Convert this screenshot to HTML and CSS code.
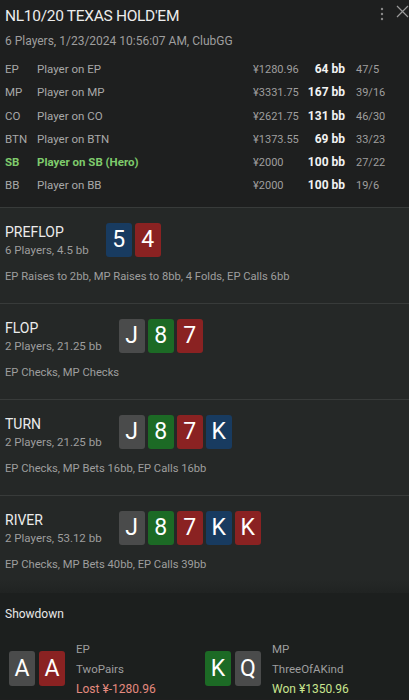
FILE: index.html
```html
<!DOCTYPE html>
<html>
<head>
<meta charset="utf-8">
<link rel="stylesheet" href="styles.css">
</head>
<body>
<div class="panel">
  <header class="header">
    <div class="title-row">
      <div class="title">NL10/20 TEXAS HOLD'EM</div>
      <div class="actions">
        <svg class="kebab" width="6" height="16" viewBox="0 0 6 16"><circle cx="3" cy="3" r="1.2"/><circle cx="3" cy="8" r="1.2"/><circle cx="3" cy="13" r="1.2"/></svg>
        <svg class="close" width="13" height="13" viewBox="0 0 13 13"><path d="M1 1 L12 12 M12 1 L1 12"/></svg>
      </div>
    </div>
    <div class="subtitle">6 Players, 1/23/2024 10:56:07 AM, ClubGG</div>
    <div class="players">
      <div class="prow"><span class="pos">EP</span><span class="name">Player on EP</span><span class="stack">¥1280.96</span><span class="bb">64 bb</span><span class="ratio">47/5</span></div>
      <div class="prow"><span class="pos">MP</span><span class="name">Player on MP</span><span class="stack">¥3331.75</span><span class="bb">167 bb</span><span class="ratio">39/16</span></div>
      <div class="prow"><span class="pos">CO</span><span class="name">Player on CO</span><span class="stack">¥2621.75</span><span class="bb">131 bb</span><span class="ratio">46/30</span></div>
      <div class="prow"><span class="pos">BTN</span><span class="name">Player on BTN</span><span class="stack">¥1373.55</span><span class="bb">69 bb</span><span class="ratio">33/23</span></div>
      <div class="prow hero"><span class="pos">SB</span><span class="name">Player on SB (Hero)</span><span class="stack">¥2000</span><span class="bb">100 bb</span><span class="ratio">27/22</span></div>
      <div class="prow"><span class="pos">BB</span><span class="name">Player on BB</span><span class="stack">¥2000</span><span class="bb">100 bb</span><span class="ratio">19/6</span></div>
    </div>
  </header>

  <section class="street">
    <div class="street-head">
      <div class="street-info">
        <div class="street-name">PREFLOP</div>
        <div class="street-sub">6 Players, 4.5 bb</div>
      </div>
      <div class="cards">
        <span class="card blue">5</span><span class="card red">4</span>
      </div>
    </div>
    <div class="street-actions">EP Raises to 2bb, MP Raises to 8bb, 4 Folds, EP Calls 6bb</div>
  </section>

  <section class="street">
    <div class="street-head">
      <div class="street-info">
        <div class="street-name">FLOP</div>
        <div class="street-sub">2 Players, 21.25 bb</div>
      </div>
      <div class="cards">
        <span class="card grey">J</span><span class="card green">8</span><span class="card red">7</span>
      </div>
    </div>
    <div class="street-actions">EP Checks, MP Checks</div>
  </section>

  <section class="street">
    <div class="street-head">
      <div class="street-info">
        <div class="street-name">TURN</div>
        <div class="street-sub">2 Players, 21.25 bb</div>
      </div>
      <div class="cards">
        <span class="card grey">J</span><span class="card green">8</span><span class="card red">7</span><span class="card blue">K</span>
      </div>
    </div>
    <div class="street-actions">EP Checks, MP Bets 16bb, EP Calls 16bb</div>
  </section>

  <section class="street last">
    <div class="street-head">
      <div class="street-info">
        <div class="street-name">RIVER</div>
        <div class="street-sub">2 Players, 53.12 bb</div>
      </div>
      <div class="cards">
        <span class="card grey">J</span><span class="card green">8</span><span class="card red">7</span><span class="card blue">K</span><span class="card red">K</span>
      </div>
    </div>
    <div class="street-actions">EP Checks, MP Bets 40bb, EP Calls 39bb</div>
  </section>

  <section class="showdown">
    <div class="showdown-title">Showdown</div>
    <div class="hands">
      <div class="hand">
        <div class="cards">
          <span class="card big grey">A</span><span class="card big red">A</span>
        </div>
        <div class="hand-info">
          <div class="hand-pos">EP</div>
          <div class="hand-rank">TwoPairs</div>
          <div class="hand-result lost">Lost ¥-1280.96</div>
        </div>
      </div>
      <div class="hand">
        <div class="cards">
          <span class="card big green">K</span><span class="card big grey">Q</span>
        </div>
        <div class="hand-info">
          <div class="hand-pos">MP</div>
          <div class="hand-rank">ThreeOfAKind</div>
          <div class="hand-result won">Won ¥1350.96</div>
        </div>
      </div>
    </div>
  </section>
</div>
</body>
</html>
```
FILE: styles.css
```css
* { box-sizing: border-box; }
html, body { margin: 0; padding: 0; }
body {
  background: #1e1f1f;
  font-family: Roboto, "Noto Sans", sans-serif;
  color: #e6e6e6;
  width: 409px;
  height: 700px;
  overflow: hidden;
}
.panel { display: flex; flex-direction: column; }

.header { padding: 5px 5px 9px 5px; }
.title-row { display: flex; justify-content: space-between; align-items: flex-start; }
.title { font-size: 15.5px; line-height: 22px; color: #ececec; letter-spacing: -0.3px; }
.actions { display: flex; align-items: flex-start; gap: 11px; margin-top: 0; margin-right: -5px; }
.kebab { fill: #8a8a8a; margin-top: 1px; }
.close { stroke: #9a9a9a; stroke-width: 1.2; fill: none; }
.subtitle { font-size: 12px; line-height: 18px; color: #9e9e9e; margin-top: 5px; }

.players { margin-top: 8px; display: flex; flex-direction: column; }
.prow {
  display: grid;
  grid-template-columns: 32px 216px 50px 42px 1fr;
  align-items: baseline;
  font-size: 11.5px;
  line-height: 23.3px;
  color: #a8a8a8;
  white-space: nowrap;
}
.prow .pos { font-size: 11.5px; }
.prow .stack { font-size: 11px; color: #9e9e9e; }
.prow .bb { text-align: right; font-weight: bold; color: #f2f2f2; font-size: 12px; }
.prow .ratio { padding-left: 11px; font-size: 11px; color: #9e9e9e; }
.prow.hero .pos, .prow.hero .name { color: #7fcb6c; font-weight: bold; }

.street {
  background: #252827;
  border-top: 1px solid #383b3a;
  padding: 14px 5px 18px 5px;
  height: 96px;
}
.street.last {
  height: 98px;
  background: linear-gradient(#252827 0%, #252827 86%, #202322 100%);
}
.street-head { display: flex; align-items: center; gap: 17px; }
.street-info { display: flex; flex-direction: column; }
.street-name { font-size: 14px; line-height: 20px; color: #ececec; }
.street-sub { font-size: 11.5px; line-height: 16px; color: #9e9e9e; }
.street-actions { font-size: 11.2px; line-height: 16px; color: #9e9e9e; margin-top: 11px; white-space: nowrap; }

.cards { display: flex; gap: 3px; }
.card {
  width: 26px;
  height: 34px;
  border-radius: 3px;
  color: #ffffff;
  font-size: 23px;
  line-height: 34px;
  text-align: center;
}
.card.big { height: 35px; line-height: 35px; }
.card.blue { background: #183b60; }
.card.red { background: #8a2222; }
.card.green { background: #1c6a25; }
.card.grey { background: #4a4b4b; }

.showdown { background: #1c1f1e; padding: 12px 5px 0 5px; flex: 1; }
.showdown-title { font-size: 12px; line-height: 18px; color: #e8e8e8; }
.hands { display: grid; grid-template-columns: 196px 1fr; margin-top: 16px; padding-left: 4px; }
.hand { display: flex; align-items: center; gap: 11px; }
.hand .cards { gap: 4px; }
.hand-info { display: flex; flex-direction: column; font-size: 11.5px; line-height: 20px; color: #9e9e9e; }
.hand-result { font-size: 12px; }
.hand-result.lost { color: #e48a7e; }
.hand-result.won { color: #c9e58e; }
```
